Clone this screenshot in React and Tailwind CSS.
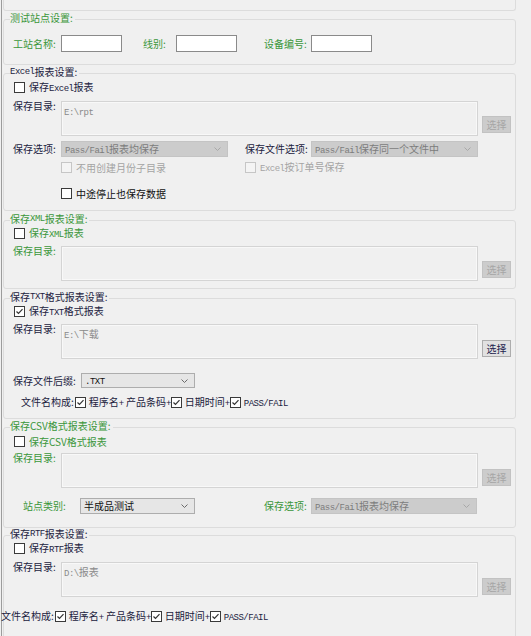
import React from "react";

const green = "text-[#3a963a]";
const dark = "text-[#22223e]";

function L({ children }) {
  return (
    <span className="font-['Liberation_Mono',monospace] text-[9px] leading-none tracking-[-0.5px]">{children}</span>
  );
}

function Box({ checked, disabled }) {
  return (
    <span
      className={`flex w-[11px] h-[11px] shrink-0 items-center justify-center border ${
        disabled ? "border-[#c6c6c6] bg-[#f4f4f4]" : "border-[#3a3a3a] bg-white"
      }`}
    >
      {checked && (
        <svg width="9" height="9" viewBox="0 0 9 9">
          <path d="M1.5 4.5 L3.5 6.5 L7.5 2.2" fill="none" stroke="#333" strokeWidth="1.2" />
        </svg>
      )}
    </span>
  );
}

function Check({ children, checked, disabled, color }) {
  return (
    <div className="flex items-center h-[11px]">
      <Box checked={checked} disabled={disabled} />
      <span className={`ml-[4px] whitespace-nowrap ${disabled ? "text-[#a4a4a4]" : color}`}>{children}</span>
    </div>
  );
}

function Chevron({ color }) {
  return (
    <svg width="7" height="4" viewBox="0 0 7 4" className="ml-auto mr-[6px] shrink-0">
      <path d="M0.5 0.5 L3.5 3.5 L6.5 0.5" fill="none" stroke={color} strokeWidth="1" />
    </svg>
  );
}

function Select({ w, h, disabled, children }) {
  return (
    <div
      className={`flex items-center border pl-[3px] whitespace-nowrap ${w} ${h} ${
        disabled ? "bg-[#cccccc] border-[#c4c4c4] text-[#7c7c7c]" : "bg-[#e6e6e6] border-[#adadad] text-[#111111]"
      }`}
    >
      <span>{children}</span>
      <Chevron color={disabled ? "#a8a8a8" : "#6a6a6a"} />
    </div>
  );
}

function DirRow({ label, color, value, enabled, mt, btnMt }) {
  return (
    <div className={`flex items-start ${mt}`}>
      <span className={`w-[57px] pl-[9px] -mt-[1px] whitespace-nowrap ${color}`}>{label}</span>
      <div className="w-[417px] h-[35px] border border-[#d4d4d4] bg-[#f0f0f0] shadow-[inset_0_0_0_1px_#f8f8f8] pl-[2px] pt-[3px] text-[#8a8a8a]">
        {value}
      </div>
      <button
        className={`ml-[4px] w-[29px] h-[17px] flex items-center justify-center border ${btnMt} ${
          enabled ? "bg-[#e1e1e1] border-[#adadad] text-[#22224e]" : "bg-[#cccccc] border-[#c2c2c2] text-[#a6a6a6]"
        }`}
      >
        选择
      </button>
    </div>
  );
}

function Group({ legend, legendColor, mt, h, children }) {
  return (
    <div className={`relative ml-[1px] w-[513px] border border-[#dcdcdc] rounded-[3px] ${mt} ${h}`}>
      <span className={`absolute -top-[8px] left-[6px] h-[12px] flex items-center bg-[#f0f0f0] pr-[2px] whitespace-nowrap ${legendColor}`}>
        {legend}
      </span>
      {children}
    </div>
  );
}

function NameParts({ color }) {
  return (
    <div className={`flex items-center h-[12px] whitespace-nowrap ${color}`}>
      <span>文件名构成:</span>
      <span className="ml-[1px]"><Box checked /></span>
      <span className="ml-[3px]">程序名<L>+</L> 产品条码<L>+</L></span>
      <Box checked />
      <span className="ml-[3px]">日期时间<L>+</L></span>
      <Box checked />
      <span className="ml-[3px]"><L>PASS/FAIL</L></span>
    </div>
  );
}

export default function App() {
  return (
    <div className="h-[636px] overflow-hidden bg-[#f0f0f0] pl-[1px] font-['Noto_Sans_CJK_SC',sans-serif] text-[10px] leading-[12px]">
      <div className="h-full border-l border-[#9c9c9c]">
        <div className="ml-[1px] w-[513px] h-[11px] border-x border-b border-[#dcdcdc] rounded-b-[3px]" />

        <Group legend="测试站点设置:" legendColor={green} mt="mt-[8px]" h="h-[46px]">
          <div className={`flex items-center h-[17px] mt-[15px] pl-[9px] ${green}`}>
            <span className="w-[48px]">工站名称:</span>
            <div className="w-[61px] h-[17px] bg-white border border-[#8a8a8a]" />
            <span className="ml-[21px] w-[33px]">线别:</span>
            <div className="w-[61px] h-[17px] bg-white border border-[#8a8a8a]" />
            <span className="ml-[27px] w-[47px]">设备编号:</span>
            <div className="w-[61px] h-[17px] bg-white border border-[#8a8a8a]" />
          </div>
        </Group>

        <Group legend={<><L>Excel</L>报表设置:</>} legendColor={dark} mt="mt-[8px]" h="h-[138px]">
          <div className="mt-[8px] pl-[10px]">
            <Check color={dark}>保存<L>Excel</L>报表</Check>
          </div>
          <DirRow label="保存目录:" color={dark} value={<L>E:\rpt</L>} mt="mt-[8px]" btnMt="mt-[15px]" />
          <div className={`flex items-center mt-[5px] ${dark}`}>
            <span className="w-[57px] pl-[9px] whitespace-nowrap">保存选项:</span>
            <Select w="w-[167px]" h="h-[16px]" disabled>
              <L>Pass/Fail</L>报表均保存
            </Select>
            <span className="ml-[17px] w-[66px] whitespace-nowrap">保存文件选项:</span>
            <Select w="w-[167px]" h="h-[16px]" disabled>
              <L>Pass/Fail</L>保存同一个文件中
            </Select>
          </div>
          <div className="flex items-center mt-[5px] pl-[57px]">
            <div className="w-[184px]">
              <Check disabled>不用创建月份子目录</Check>
            </div>
            <Check disabled><L>Excel</L>按订单号保存</Check>
          </div>
          <div className="mt-[15px] pl-[57px]">
            <Check color="text-[#111111]">中途停止也保存数据</Check>
          </div>
        </Group>

        <Group legend={<>保存<L>XML</L>报表设置:</>} legendColor={green} mt="mt-[9px]" h="h-[69px]">
          <div className="mt-[7px] pl-[10px]">
            <Check color={green}>保存<L>XML</L>报表</Check>
          </div>
          <DirRow label="保存目录:" color={green} value="" mt="mt-[7px]" btnMt="mt-[15px]" />
        </Group>

        <Group legend={<>保存<L>TXT</L>格式报表设置:</>} legendColor={dark} mt="mt-[9px]" h="h-[121px]">
          <div className="mt-[7px] pl-[10px]">
            <Check checked color={dark}>保存<L>TXT</L>格式报表</Check>
          </div>
          <DirRow label="保存目录:" color={dark} value={<><L>E:\</L>下载</>} mt="mt-[7px]" btnMt="mt-[16px]" enabled />
          <div className={`flex items-center mt-[14px] ${dark}`}>
            <span className="w-[77px] pl-[9px] whitespace-nowrap">保存文件后缀:</span>
            <Select w="w-[114px]" h="h-[15px]">
              <L>.TXT</L>
            </Select>
          </div>
          <div className="mt-[8px] pl-[17px]">
            <NameParts color={dark} />
          </div>
        </Group>

        <Group legend="保存CSV格式报表设置:" legendColor={green} mt="mt-[8px]" h="h-[101px]">
          <div className="mt-[8px] pl-[10px]">
            <Check color={green}>保存CSV格式报表</Check>
          </div>
          <DirRow label="保存目录:" color={green} value="" mt="mt-[6px]" btnMt="mt-[16px]" />
          <div className={`flex items-center mt-[10px] ${green}`}>
            <span className="w-[76px] pl-[19px] whitespace-nowrap">站点类别:</span>
            <Select w="w-[115px]" h="h-[16px]">
              半成品测试
            </Select>
            <span className="ml-[69px] w-[47px] whitespace-nowrap">保存选项:</span>
            <Select w="w-[166px]" h="h-[16px]" disabled>
              <L>Pass/Fail</L>报表均保存
            </Select>
          </div>
        </Group>

        <Group legend={<>保存<L>RTF</L>报表设置:</>} legendColor={dark} mt="mt-[7px]" h="h-[110px]">
          <div className="mt-[7px] pl-[10px]">
            <Check color={dark}>保存<L>RTF</L>报表</Check>
          </div>
          <DirRow label="保存目录:" color={dark} value={<><L>D:\</L>报表</>} mt="mt-[8px]" btnMt="mt-[16px]" />
          <div className="mt-[13px] -ml-[3px]">
            <NameParts color={dark} />
          </div>
        </Group>
      </div>
    </div>
  );
}
